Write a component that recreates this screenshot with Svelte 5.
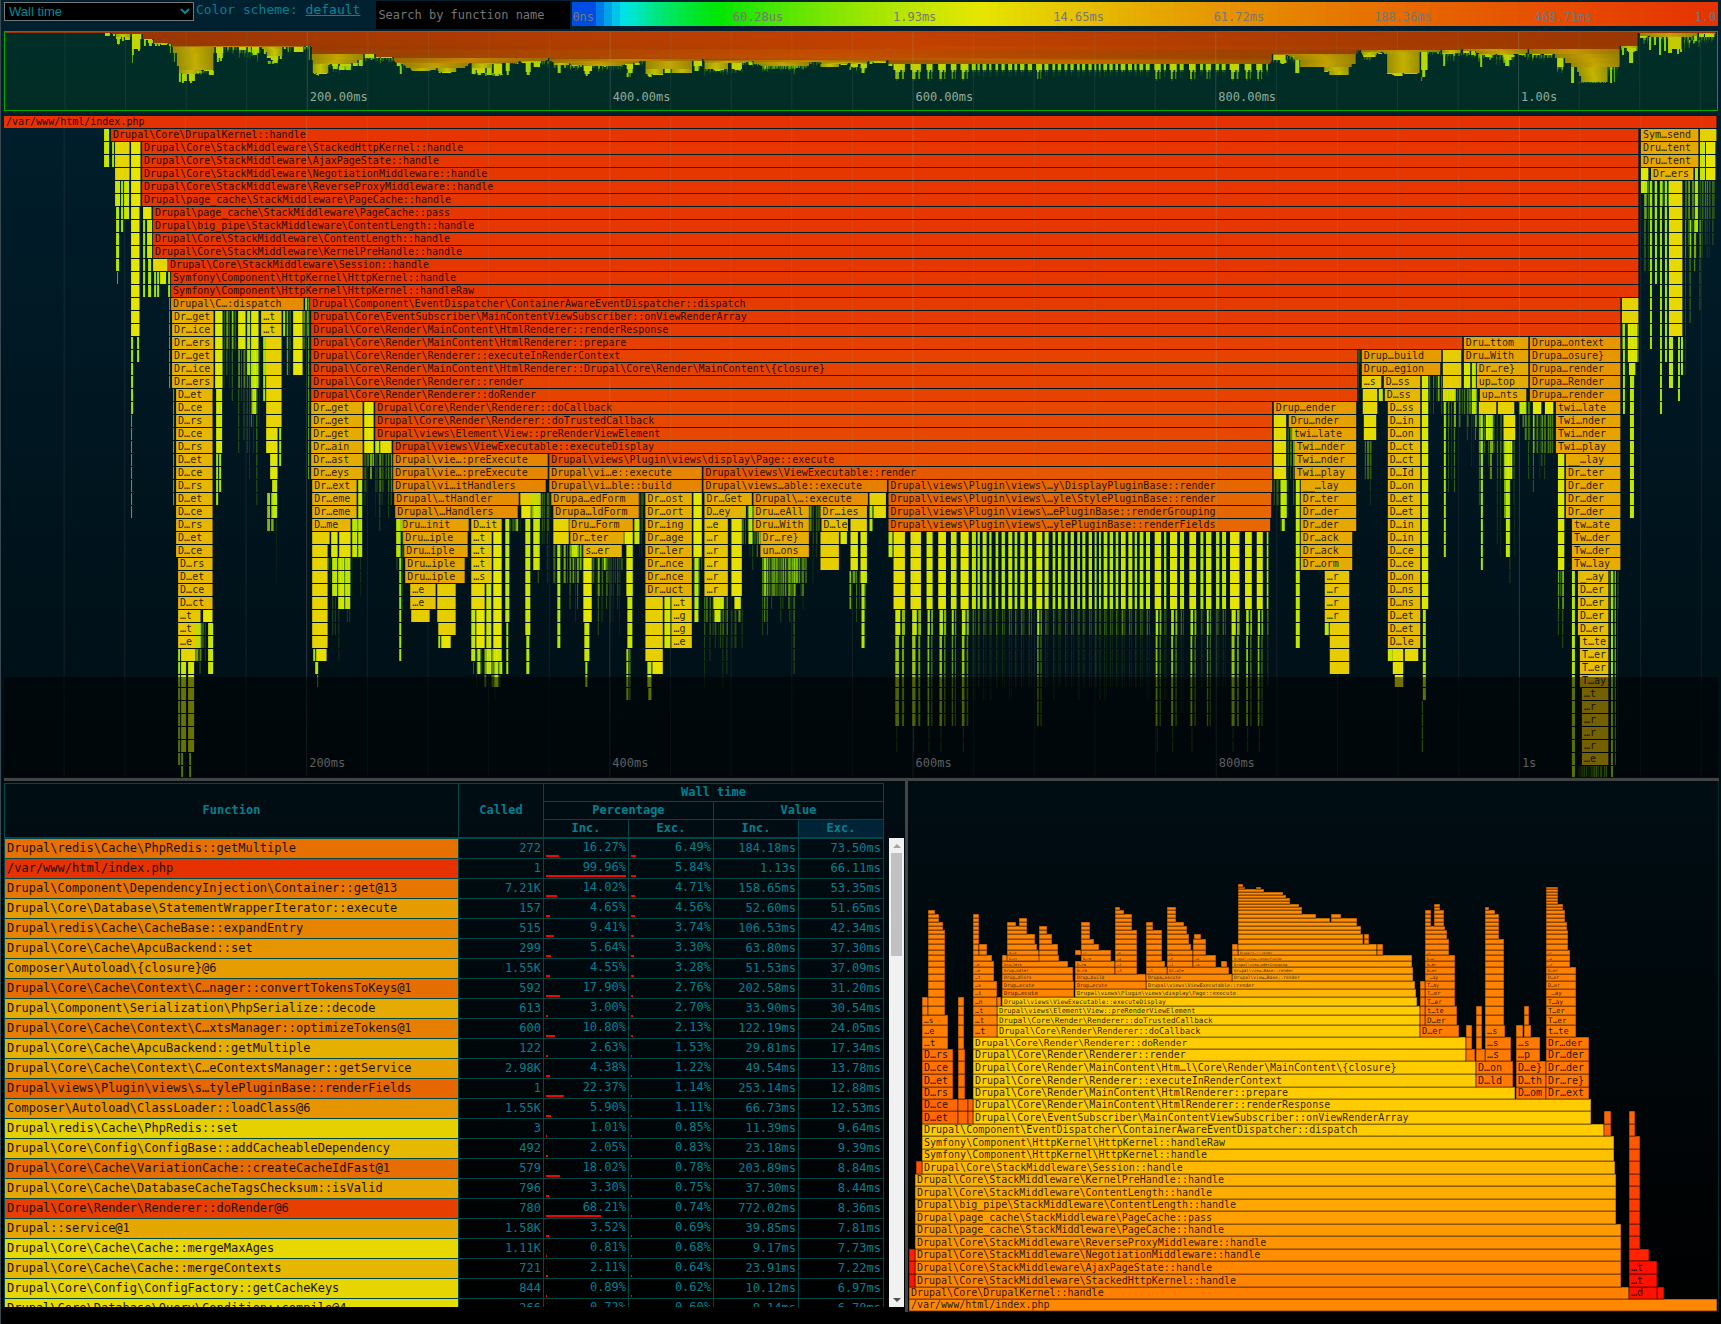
<script>
  // Horizontal axis of the timeline: AXIS_START is the x of t=0, AXIS_SPAN the whole run.
  const AXIS_START = 4;
  const AXIS_SPAN = 1713;
  const ROW = 13;
  const TOTAL_NS = 1.131e9;
  const NS_PER_UNIT = TOTAL_NS / 1711;

  let metric = $state('Wall time');
  let search = $state('');

  const path = [[0, 77, 230], [0, 230, 230], [0, 230, 0], [230, 230, 0], [230, 50, 0]];

  function costColor(ns) {
    const c = ns > 1 ? Math.min(1, Math.log(ns) / Math.log(TOTAL_NS)) : 0;
    const pos = c * (path.length - 1);
    const i = Math.min(path.length - 2, Math.floor(pos));
    const k = pos - i;
    const rgb = path[i].map((v, n) => Math.round(v + (path[i + 1][n] - v) * k));
    return `rgb(${rgb.join(',')})`;
  }

  const scaleLabels = ['0ns', '60.28us', '1.93ms', '14.65ms', '61.72ms', '188.36ms', '468.71ms', '1.01s'];
  const scale = Array.from({ length: 143 }, (_, i) => ({
    color: costColor(Math.pow(i / 143, 5) * TOTAL_NS),
    label: i % 20 === 0 ? scaleLabels[i / 20] : ''
  }));

  // [row, start, end, label]
  const calls = [
    [0, 4, 1716, '/var/www/html/index.php'],
    [1, 111, 1638, 'Drupal\\Core\\DrupalKernel::handle'],
    [2, 142, 1638, 'Drupal\\Core\\StackMiddleware\\StackedHttpKernel::handle'],
    [3, 142, 1638, 'Drupal\\Core\\StackMiddleware\\AjaxPageState::handle'],
    [4, 142, 1638, 'Drupal\\Core\\StackMiddleware\\NegotiationMiddleware::handle'],
    [5, 142, 1638, 'Drupal\\Core\\StackMiddleware\\ReverseProxyMiddleware::handle'],
    [6, 142, 1638, 'Drupal\\page_cache\\StackMiddleware\\PageCache::handle'],
    [7, 153, 1638, 'Drupal\\page_cache\\StackMiddleware\\PageCache::pass'],
    [8, 153, 1638, 'Drupal\\big_pipe\\StackMiddleware\\ContentLength::handle'],
    [9, 153, 1638, 'Drupal\\Core\\StackMiddleware\\ContentLength::handle'],
    [10, 153, 1638, 'Drupal\\Core\\StackMiddleware\\KernelPreHandle::handle'],
    [11, 168, 1638, 'Drupal\\Core\\StackMiddleware\\Session::handle'],
    [12, 171, 1638, 'Symfony\\Component\\HttpKernel\\HttpKernel::handle'],
    [13, 171, 1638, 'Symfony\\Component\\HttpKernel\\HttpKernel::handleRaw'],
    [14, 171, 304, 'Drupal\\C…:dispatch'],
    [14, 310, 1620, 'Drupal\\Component\\EventDispatcher\\ContainerAwareEventDispatcher::dispatch'],
    [15, 311, 1620, 'Drupal\\Core\\EventSubscriber\\MainContentViewSubscriber::onViewRenderArray'],
    [16, 311, 1620, 'Drupal\\Core\\Render\\MainContent\\HtmlRenderer::renderResponse'],
    [17, 311, 1462, 'Drupal\\Core\\Render\\MainContent\\HtmlRenderer::prepare'],
    [18, 311, 1357, 'Drupal\\Core\\Render\\Renderer::executeInRenderContext'],
    [19, 311, 1357, 'Drupal\\Core\\Render\\MainContent\\HtmlRenderer::Drupal\\Core\\Render\\MainContent\\{closure}'],
    [20, 311, 1357, 'Drupal\\Core\\Render\\Renderer::render'],
    [21, 311, 1357, 'Drupal\\Core\\Render\\Renderer::doRender'],
    [22, 375, 1272, 'Drupal\\Core\\Render\\Renderer::doCallback'],
    [23, 375, 1272, 'Drupal\\Core\\Render\\Renderer::doTrustedCallback'],
    [24, 375, 1272, 'Drupal\\views\\Element\\View::preRenderViewElement'],
    [25, 393, 1272, 'Drupal\\views\\ViewExecutable::executeDisplay'],
    [26, 393, 548, 'Drupal\\vie…:preExecute'],
    [26, 549, 1272, 'Drupal\\views\\Plugin\\views\\display\\Page::execute'],
    [27, 393, 548, 'Drupal\\vie…:preExecute'],
    [27, 549, 702, 'Drupal\\vi…e::execute'],
    [27, 703, 1272, 'Drupal\\views\\ViewExecutable::render'],
    [28, 393, 546, 'Drupal\\vi…itHandlers'],
    [28, 549, 702, 'Drupal\\vi…ble::build'],
    [28, 703, 887, 'Drupal\\views…able::execute'],
    [28, 888, 1272, 'Drupal\\views\\Plugin\\views\\…y\\DisplayPluginBase::render'],
    [29, 394, 519, 'Drupal\\…tHandler'],
    [29, 551, 639, 'Drupa…edForm'],
    [29, 704, 752, 'Dr…Get'],
    [29, 753, 868, 'Drupal\\…:execute'],
    [29, 888, 1271, 'Drupal\\views\\Plugin\\views\\…yle\\StylePluginBase::render'],
    [30, 395, 518, 'Drupal\\…Handlers'],
    [30, 553, 639, 'Drupa…ldForm'],
    [30, 704, 746, 'D…ey'],
    [30, 753, 809, 'Dru…eAll'],
    [30, 820, 867, 'Dr…ies'],
    [30, 888, 1271, 'Drupal\\views\\Plugin\\views\\…ePluginBase::renderGrouping'],
    [31, 400, 469, 'Dru…init'],
    [31, 471, 502, 'D…it'],
    [31, 569, 633, 'Dru…Form'],
    [31, 753, 809, 'Dru…With'],
    [31, 821, 848, 'D…le'],
    [31, 888, 1270, 'Drupal\\views\\Plugin\\views\\…ylePluginBase::renderFields'],
    [32, 403, 468, 'Dru…iple'],
    [32, 570, 624, 'Dr…ter'],
    [32, 760, 809, 'Dr…re}'],
    [33, 404, 468, 'Dru…iple'],
    [33, 583, 622, 's…er'],
    [33, 760, 809, 'un…ons'],
    [34, 405, 465, 'Dru…iple'],
    [35, 405, 465, 'Dru…iple'],
    [36, 410, 436, '…e'],
    [37, 410, 436, '…e'],
    [1, 1640, 1698, 'Sym…send'],
    [2, 1640, 1698, 'Dru…tent'],
    [3, 1640, 1698, 'Dru…tent'],
    [4, 1650, 1693, 'Dr…ers'],
    [17, 1463, 1528, 'Dru…ttom'],
    [18, 1361, 1441, 'Drup…build'],
    [18, 1463, 1528, 'Dru…With'],
    [19, 1361, 1440, 'Drup…egion'],
    [19, 1476, 1528, 'Dr…re}'],
    [20, 1361, 1381, '…s'],
    [20, 1383, 1420, 'D…ss'],
    [20, 1476, 1528, 'up…top'],
    [21, 1384, 1420, 'D…ss'],
    [21, 1479, 1526, 'up…nts'],
    [22, 1273, 1356, 'Drup…ender'],
    [23, 1288, 1356, 'Dru…nder'],
    [24, 1291, 1356, 'twi…late'],
    [22, 1555, 1620, 'twi…late']
  ];

  // runs of labelled calls nested straight under each other: [row, start, end, labels]
  const stacks = [
    [15, 172, 214, 'Dr…get Dr…ice Dr…ers Dr…get Dr…ice Dr…ers'],
    [21, 176, 213, 'D…et D…ce D…rs D…ce D…rs D…et D…ce D…rs D…et D…ce D…rs D…et D…ce'],
    [34, 178, 213, 'D…rs D…et D…ce D…ct'],
    [38, 178, 201, '…t …t …e'],
    [15, 261, 282, '…t …t'],
    [22, 311, 363, 'Dr…get Dr…get Dr…get Dr…ain Dr…ast Dr…eys'],
    [28, 312, 357, 'Dr…ext Dr…eme Dr…eme'],
    [31, 312, 351, 'D…me'],
    [32, 471, 492, '…t …t …t …s'],
    [29, 645, 692, 'Dr…ost Dr…ort Dr…ing Dr…age Dr…ler Dr…nce Dr…nce Dr…uct'],
    [37, 671, 692, '…t …g …g …e'],
    [31, 704, 728, '…e …r …r …r …r …r'],
    [17, 1529, 1620, 'Drupa…ontext Drupa…osure} Drupa…render Drupa…Render Drupa…render'],
    [23, 1555, 1620, 'Twi…nder Twi…nder Twi…play'],
    [26, 1565, 1620, '__…lay Dr…ter Dr…der Dr…der Dr…der'],
    [31, 1571, 1620, 'tw…ate Tw…der Tw…der Tw…lay'],
    [35, 1577, 1608, '_…ay D…er D…er D…er D…er'],
    [40, 1579, 1608, 't…te T…er T…er T…ay'],
    [44, 1581, 1608, '…t …r …r …r …r …e'],
    [25, 1294, 1356, 'Twi…nder Twi…nder Twi…play'],
    [28, 1300, 1356, '__…lay Dr…ter Dr…der Dr…der'],
    [32, 1300, 1352, 'Dr…ack Dr…ack Dr…orm'],
    [35, 1324, 1349, '…r …r …r …r'],
    [22, 1387, 1420, 'D…ss D…in D…on D…ct D…ct D…Id D…on D…et D…et D…in D…in D…ce D…ce D…on D…ns D…ns D…et D…et D…le']
  ];

  // unlabelled columns: [start, end, first row, last row]
  const columns = [
    [104, 109, 1, 3], [112, 114, 2, 3], [115, 130, 2, 4], [131, 141, 2, 6], [115, 120, 5, 6], [121, 123, 5, 8], [124, 129, 5, 7],
    [116, 119, 7, 11], [117, 118, 12, 12], [131, 140, 7, 16], [131, 133, 17, 22], [137, 139, 17, 18], [131, 132, 23, 30],
    [143, 152, 7, 7], [143, 145, 8, 13], [147, 152, 8, 10], [148, 151, 11, 13], [154, 156, 12, 13], [153, 168, 11, 11], [160, 166, 12, 12],
    [157, 159, 12, 13], [168, 170, 12, 13], [169, 170, 14, 20], [173, 174, 21, 29],
    [203, 213, 38, 38], [208, 213, 39, 42], [178, 180, 41, 49], [181, 196, 41, 41], [181, 186, 42, 48], [181, 183, 49, 50], [188, 194, 42, 48], [189, 191, 49, 50],
    [215, 223, 15, 20], [216, 222, 21, 25], [216, 218, 26, 29], [219, 221, 26, 28], [238, 246, 15, 17], [247, 250, 15, 19], [251, 259, 15, 20], [252, 256, 21, 22],
    [263, 265, 17, 21], [265, 282, 17, 19], [266, 282, 20, 23], [266, 278, 24, 25], [279, 281, 24, 26], [270, 278, 26, 27], [272, 277, 28, 30],
    [283, 285, 15, 16], [287, 288, 15, 19], [293, 303, 15, 19], [305, 307, 14, 14], [308, 309, 14, 27],
    [364, 374, 22, 25], [375, 379, 25, 25], [380, 392, 25, 25], [358, 362, 28, 33], [352, 357, 31, 33],
    [312, 330, 32, 32], [312, 328, 33, 40], [331, 338, 32, 33], [339, 351, 32, 33], [332, 337, 34, 36], [338, 344, 34, 37], [345, 350, 34, 37],
    [316, 327, 41, 41], [313, 315, 41, 41], [315, 318, 42, 42], [317, 318, 43, 43],
    [396, 400, 31, 33], [399, 401, 34, 41], [437, 456, 36, 38], [411, 430, 38, 38], [438, 456, 39, 39], [438, 440, 40, 40], [441, 451, 40, 40],
    [493, 502, 32, 41], [471, 485, 36, 37], [471, 475, 38, 41], [476, 485, 38, 40], [486, 491, 36, 42], [477, 480, 41, 42], [494, 498, 42, 43], [499, 502, 42, 42],
    [505, 509, 31, 38], [506, 508, 39, 42], [520, 541, 29, 29], [521, 531, 30, 30], [533, 541, 30, 30], [525, 530, 31, 39], [526, 529, 40, 42], [533, 540, 31, 34],
    [553, 569, 31, 32], [634, 639, 31, 32], [624, 633, 32, 32], [557, 560, 33, 40], [571, 577, 33, 33], [583, 592, 34, 38], [584, 589, 39, 41],
    [585, 587, 42, 43], [626, 633, 33, 36], [627, 632, 37, 40], [626, 628, 41, 44], [629, 630, 41, 44],
    [693, 702, 29, 33], [645, 663, 37, 41], [664, 670, 37, 40], [647, 651, 42, 43], [652, 663, 42, 42], [648, 651, 44, 44],
    [694, 698, 34, 38], [731, 742, 31, 36], [734, 741, 37, 37], [748, 752, 30, 32], [713, 724, 37, 37], [714, 720, 38, 38],
    [869, 886, 29, 29], [873, 886, 30, 30], [869, 872, 30, 31], [850, 867, 31, 31], [820, 839, 32, 34], [840, 847, 32, 32], [850, 858, 32, 34],
    [860, 867, 32, 35], [861, 864, 36, 40],
    [1699, 1716, 1, 1], [1699, 1704, 2, 4], [1705, 1715, 2, 4], [1640, 1648, 4, 4], [1640, 1647, 5, 5], [1668, 1682, 5, 16], [1694, 1697, 4, 8],
    [1649, 1651, 5, 17], [1659, 1661, 5, 22], [1654, 1656, 5, 12], [1664, 1666, 5, 18], [1668, 1672, 17, 20], [1677, 1679, 17, 21], [1680, 1682, 17, 19],
    [1621, 1638, 14, 15], [1627, 1637, 16, 18], [1628, 1635, 19, 19], [1629, 1633, 20, 30], [1622, 1624, 16, 22],
    [1442, 1461, 18, 20], [1463, 1470, 19, 20], [1471, 1475, 19, 22], [1362, 1377, 21, 22], [1363, 1376, 23, 24], [1442, 1455, 21, 21], [1378, 1382, 21, 21],
    [1478, 1496, 22, 22], [1497, 1514, 22, 22], [1485, 1492, 23, 24], [1503, 1515, 23, 24], [1504, 1512, 25, 27], [1505, 1509, 28, 33], [1480, 1482, 23, 34],
    [1519, 1525, 22, 22], [1532, 1541, 22, 22], [1544, 1553, 22, 22], [1273, 1286, 23, 27], [1280, 1286, 28, 30], [1281, 1284, 31, 31],
    [1295, 1299, 28, 40], [1421, 1428, 20, 37], [1422, 1425, 38, 44], [1421, 1422, 45, 48], [1557, 1564, 26, 34], [1571, 1574, 35, 50],
    [1329, 1349, 39, 42], [1324, 1328, 39, 39], [1387, 1392, 41, 41], [1392, 1403, 41, 42], [1404, 1418, 41, 41], [1394, 1403, 43, 43],
    [1443, 1445, 22, 33], [1610, 1612, 35, 50], [1614, 1615, 35, 49], [888, 892, 32, 33]
  ];

  // many tiny calls: [start, end, first row, deepest row, average pitch]
  const swarms = [
    [224, 236, 15, 22, 3], [238, 260, 18, 29, 3], [267, 277, 29, 37, 4], [303, 308, 15, 17, 3], [196, 206, 39, 43, 3], [286, 292, 15, 20, 4],
    [328, 352, 34, 41, 3], [352, 362, 31, 36, 3], [364, 392, 26, 31, 3], [396, 404, 31, 38, 4], [471, 502, 41, 44, 4], [510, 520, 31, 31, 3],
    [531, 550, 29, 36, 4], [553, 583, 33, 38, 3], [592, 622, 34, 39, 3], [639, 645, 29, 34, 2], [693, 702, 34, 39, 3], [704, 728, 37, 43, 3],
    [731, 742, 38, 41, 4], [742, 752, 30, 38, 3], [762, 806, 34, 38, 2], [762, 806, 34, 42, 3], [752, 760, 32, 34, 3], [809, 819, 30, 36, 3], [849, 867, 35, 41, 4],
    [1273, 1286, 28, 31, 3], [1287, 1295, 24, 30, 3], [1357, 1361, 18, 22, 2], [1364, 1371, 25, 29, 3], [1428, 1441, 20, 22, 3],
    [1442, 1462, 21, 30, 3], [1463, 1477, 21, 27, 3], [1478, 1503, 23, 30, 5], [1496, 1514, 25, 36, 5], [1518, 1530, 22, 29, 3],
    [1532, 1553, 23, 29, 3], [1557, 1564, 35, 41, 3], [1608, 1618, 35, 50, 3], [1577, 1606, 50, 50, 2], [1621, 1638, 16, 23, 4],
    [1640, 1668, 5, 12, 4], [1684, 1716, 5, 10, 4], [1684, 1700, 8, 19, 6]
  ];

  // one [offset, width] pair per rendered field, in thirds of a unit from 880
  const fieldRuns = [
    [39, 36], [90, 33], [138, 20], [173, 25], [211, 17], [240, 26], [274, 12], [291, 7], [306, 12], [326, 7], [345, 8], [363, 10], [383, 12],
    [402, 8], [419, 13], [442, 13], [467, 18], [492, 12], [516, 8], [532, 10], [552, 9], [570, 10], [590, 8], [605, 9], [624, 10], [642, 6],
    [655, 6], [669, 11], [687, 10], [705, 8], [721, 14], [743, 12], [762, 7], [777, 11], [796, 12], [822, 21], [850, 7], [868, 23], [898, 12],
    [926, 22], [959, 9], [976, 16], [1006, 10], [1024, 12], [1048, 30], [1093, 22], [1128, 20], [1158, 5]
  ];

  function makeRandom(seed) {
    let s = seed;
    return () => (s = (s * 16807) % 2147483647) / 2147483647;
  }

  function buildBars() {
    const out = [];
    const add = (row, start, end, label = '', alpha = 1) => {
      const w = end - start;
      out.push({ row, start, w: w > 6 ? w - 0.6 : w, label, color: costColor(w * NS_PER_UNIT), alpha: w < 1.6 ? alpha * 0.75 : alpha });
    };
    for (const [row, start, end, label] of calls) add(row, start, end, label);
    for (const [row, start, end, labels] of stacks) labels.split(' ').forEach((l, i) => add(row + i, start, end, l));
    for (const [start, end, from, to] of columns) for (let r = from; r <= to; r++) add(r, start, end);

    const rnd = makeRandom(4711);
    for (const [start, end, from, to, pitch] of swarms) {
      let x = start;
      while (x < end) {
        const w = Math.min(end - x, 0.5 + rnd() * pitch * 0.6);
        const strength = 0.3 + rnd() * 0.7;
        const last = from + Math.round((to - from) * rnd());
        for (let r = from; r <= last; r++) {
          const depth = (r - from) / (to - from + 1);
          add(r, x, x + (r > from + 2 ? w * 0.6 : w), '', strength * (1 - depth * 0.7));
        }
        x += w + 0.5 + rnd() * pitch * 0.5;
      }
    }

    for (const [offset, width] of fieldRuns) {
      const x = 880 + offset / 3;
      const w = width / 3;
      for (let r = 32; r <= 37; r++) add(r, x, x + w);
      const thick = w > 8 ? 0.3 : 0.25;
      const first = x + w * 0.15;
      const second = x + w * 0.7;
      const strong = w > 5 ? 1 : 0.55;
      for (let r = 38; r <= 46; r++) {
        const alpha = r < 40 ? strong : strong * (w > 5 ? 0.85 : 0.35);
        if (r > 43 && w < 5 && rnd() > 0.3) break;
        const grow = r < 40 ? 1.4 : 1;
        add(r, first, first + Math.max(1, w * thick * grow), '', alpha);
        add(r, second, second + Math.max(0.8, w * 0.18 * grow), '', alpha * 0.8);
      }
      if (w > 6) for (let r = 47; r <= 48; r++) add(r, first + 1, first + 2, '', 0.4);
    }
    return out;
  }

  const bars = buildBars();
  const ticks = Array.from({ length: 28 }, (_, i) => ({ x: AXIS_START - 1 + (i + 1) * 60.6, major: (i + 1) % 5 === 0, ms: (i + 1) * 40 }));
  const pct = (v) => `${((v / AXIS_SPAN) * 100).toFixed(3)}%`;
  const left = (x) => pct(x - AXIS_START);

  // name | called | inc % | exc % | inc | exc
  const functions = `Drupal\\redis\\Cache\\PhpRedis::getMultiple|272|16.27|6.49|184.18ms|73.50ms
/var/www/html/index.php|1|99.96|5.84|1.13s|66.11ms
Drupal\\Component\\DependencyInjection\\Container::get@13|7.21K|14.02|4.71|158.65ms|53.35ms
Drupal\\Core\\Database\\StatementWrapperIterator::execute|157|4.65|4.56|52.60ms|51.65ms
Drupal\\redis\\Cache\\CacheBase::expandEntry|515|9.41|3.74|106.53ms|42.34ms
Drupal\\Core\\Cache\\ApcuBackend::set|299|5.64|3.30|63.80ms|37.30ms
Composer\\Autoload\\{closure}@6|1.55K|4.55|3.28|51.53ms|37.09ms
Drupal\\Core\\Cache\\Context\\C…nager::convertTokensToKeys@1|592|17.90|2.76|202.58ms|31.20ms
Drupal\\Component\\Serialization\\PhpSerialize::decode|613|3.00|2.70|33.90ms|30.54ms
Drupal\\Core\\Cache\\Context\\C…xtsManager::optimizeTokens@1|600|10.80|2.13|122.19ms|24.05ms
Drupal\\Core\\Cache\\ApcuBackend::getMultiple|122|2.63|1.53|29.81ms|17.34ms
Drupal\\Core\\Cache\\Context\\C…eContextsManager::getService|2.98K|4.38|1.22|49.54ms|13.78ms
Drupal\\views\\Plugin\\views\\s…tylePluginBase::renderFields|1|22.37|1.14|253.14ms|12.88ms
Composer\\Autoload\\ClassLoader::loadClass@6|1.55K|5.90|1.11|66.73ms|12.53ms
Drupal\\redis\\Cache\\PhpRedis::set|3|1.01|0.85|11.39ms|9.64ms
Drupal\\Core\\Config\\ConfigBase::addCacheableDependency|492|2.05|0.83|23.18ms|9.39ms
Drupal\\Core\\Cache\\VariationCache::createCacheIdFast@1|579|18.02|0.78|203.89ms|8.84ms
Drupal\\Core\\Cache\\DatabaseCacheTagsChecksum::isValid|796|3.30|0.75|37.30ms|8.44ms
Drupal\\Core\\Render\\Renderer::doRender@6|780|68.21|0.74|772.02ms|8.36ms
Drupal::service@1|1.58K|3.52|0.69|39.85ms|7.81ms
Drupal\\Core\\Cache\\Cache::mergeMaxAges|1.11K|0.81|0.68|9.17ms|7.73ms
Drupal\\Core\\Cache\\Cache::mergeContexts|721|2.11|0.64|23.91ms|7.22ms
Drupal\\Core\\Config\\ConfigFactory::getCacheKeys|844|0.89|0.62|10.12ms|6.97ms
Drupal\\Core\\Database\\Query\\Condition::compile@4|266|0.72|0.60|8.14ms|6.78ms`.split('\n').map((line) => {
    const [name, called, incPct, excPct, inc, exc] = line.split('|');
    return { name, called, incPct, excPct, inc, exc, color: costColor((incPct / 100) * TOTAL_NS) };
  });

  // Flame graph. Row tops measured up from the floor; upper rows get thinner.
  const FLAME_LEFT = 909;
  const FLAME_SPAN = 809;
  const FLAME_HEIGHT = 529;
  const levels = [12, 24, 37, 50, 62, 75, 87, 100, 112, 125, 137, 150, 162, 175, 187, 200, 212, 224, 237, 250, 262, 274, 286, 296, 305, 314, 322, 330, 337, 344, 350, 356, 361, 367, 372, 377, 381, 385, 389, 393, 397, 401, 404, 407, 410, 413, 416, 419, 422, 424, 427];
  const spine = [136, 128, 132, 136, 142, 148, 154, 160, 166, 172, 178, 184, 192, 196, 204, 204, 204, 204, 204, 204, 204, 204, 204, 204, 204, 200, 182, 165];

  // [level, start, end, label, green channel]
  const flames = [
    [0, 909, 1717, '/var/www/html/index.php'],
    [1, 909, 1629, 'Drupal\\Core\\DrupalKernel::handle'],
    [2, 915, 1621, 'Drupal\\Core\\StackMiddleware\\StackedHttpKernel::handle'],
    [3, 915, 1621, 'Drupal\\Core\\StackMiddleware\\AjaxPageState::handle'],
    [4, 915, 1621, 'Drupal\\Core\\StackMiddleware\\NegotiationMiddleware::handle'],
    [5, 915, 1621, 'Drupal\\Core\\StackMiddleware\\ReverseProxyMiddleware::handle'],
    [6, 915, 1621, 'Drupal\\page_cache\\StackMiddleware\\PageCache::handle'],
    [7, 915, 1616, 'Drupal\\page_cache\\StackMiddleware\\PageCache::pass'],
    [8, 915, 1616, 'Drupal\\big_pipe\\StackMiddleware\\ContentLength::handle'],
    [9, 915, 1616, 'Drupal\\Core\\StackMiddleware\\ContentLength::handle'],
    [10, 915, 1616, 'Drupal\\Core\\StackMiddleware\\KernelPreHandle::handle'],
    [11, 922, 1615, 'Drupal\\Core\\StackMiddleware\\Session::handle'],
    [12, 922, 1614, 'Symfony\\Component\\HttpKernel\\HttpKernel::handle'],
    [13, 922, 1614, 'Symfony\\Component\\HttpKernel\\HttpKernel::handleRaw'],
    [14, 922, 1604, 'Drupal\\Component\\EventDispatcher\\ContainerAwareEventDispatcher::dispatch'],
    [15, 973, 1591, 'Drupal\\Core\\EventSubscriber\\MainContentViewSubscriber::onViewRenderArray'],
    [16, 973, 1591, 'Drupal\\Core\\Render\\MainContent\\HtmlRenderer::renderResponse'],
    [17, 973, 1515, 'Drupal\\Core\\Render\\MainContent\\HtmlRenderer::prepare'],
    [18, 973, 1476, 'Drupal\\Core\\Render\\Renderer::executeInRenderContext'],
    [19, 973, 1476, 'Drupal\\Core\\Render\\MainContent\\Htm…l\\Core\\Render\\MainContent\\{closure}'],
    [20, 973, 1466, 'Drupal\\Core\\Render\\Renderer::render'],
    [21, 973, 1466, 'Drupal\\Core\\Render\\Renderer::doRender'],
    [22, 997, 1420, 'Drupal\\Core\\Render\\Renderer::doCallback'],
    [23, 997, 1420, 'Drupal\\Core\\Render\\Renderer::doTrustedCallback'],
    [24, 997, 1420, 'Drupal\\views\\Element\\View::preRenderViewElement'],
    [25, 1002, 1417, 'Drupal\\views\\ViewExecutable::executeDisplay'],
    [26, 1075, 1416, 'Drupal\\views\\Plugin\\views\\display\\Page::execute'],
    [27, 1146, 1415, 'Drupal\\views\\ViewExecutable::render'],
    [28, 1232, 1413, 'Drupal\\view…Base::render', 160],
    [29, 1232, 1413, 'Drupal\\view…Base::render', 158],
    [30, 1232, 1412, 'Drupal\\view…nderGrouping', 156],
    [31, 1232, 1412, 'Drupal\\view…renderFields', 154],
    [32, 1238, 1377, 'Drupal\\C…r::render', 150],
    [26, 1002, 1074, 'Drup…ecute', 132], [27, 1002, 1074, 'Drup…ecute', 132], [28, 1002, 1073, 'Drup…dlers', 132],
    [29, 1002, 1073, 'Drup…ndler', 132], [30, 1002, 1068, 'Dru…lers', 132], [31, 1002, 1059, '', 132],
    [27, 1075, 1146, 'Drup…ecute', 134], [28, 1075, 1146, 'Drup…build', 134], [28, 1146, 1232, 'Drupa…xecute', 138],
    [29, 1167, 1229, 'Dr…ute', 132],
    [1, 1657, 1664, '', 20], [4, 1629, 1649, '', 35],
    [2, 909, 915, '', 20], [3, 909, 915, '', 26], [4, 909, 915, '', 32], [11, 916, 922, '', 80],
    [14, 1604, 1611, '', 100], [15, 1604, 1611, '', 104]
  ];

  // [level, start, end, labels from the bottom up, green channel]
  const flameStacks = [
    [15, 922, 958, 'D…et D…ce', 104], [17, 922, 953, 'D…rs D…et D…ce D…rs', 114], [21, 922, 948, '…t …e …s', 126],
    [22, 973, 997, '…t …t …t …n …t …s', 130], [28, 973, 994, '…t …e …e', 130],
    [17, 1516, 1546, 'D…om D…th D…e}', 118], [20, 1516, 1540, '…p …s', 122],
    [17, 1546, 1589, 'Dr…ext Dr…re} Dr…der Dr…der Dr…der', 120], [22, 1546, 1576, 't…te T…er T…er T…ay _…ay D…er D…er D…er', 128],
    [30, 1546, 1570, '…r …e …r', 130],
    [18, 1476, 1513, 'D…ld D…on', 120], [20, 1485, 1511, '…s …s', 122], [22, 1485, 1505, '…s', 128],
    [22, 1420, 1459, 'D…er', 124], [23, 1425, 1457, 'D…er t…te', 126], [25, 1425, 1455, 'T…er T…er T…ay _…ay D…er D…er D…er', 128], [32, 1425, 1449, '…s', 130],
    [29, 1075, 1115, 'D…rm D…rm', 132], [31, 1081, 1111, 'D…rm …r', 132], [29, 1115, 1137, '…t …t …g …e', 130], [29, 1146, 1167, '…t', 130],
    [30, 1167, 1193, '…l …h …j', 130], [30, 1193, 1216, '…s …e', 130], [31, 1007, 1039, 'D…it D…le', 132],
    [1, 1629, 1657, '…d …t …t', 16]
  ];

  // [start, end, first level, last level, green channel]
  const flameColumns = [
    [958, 968, 15, 16, 104], [968, 973, 15, 16, 100], [958, 965, 17, 20, 114], [958, 964, 21, 25, 124],
    [922, 928, 24, 25, 126], [928, 945, 24, 36, 130], [928, 943, 37, 38, 130], [928, 939, 39, 40, 130], [928, 935, 41, 41, 130],
    [973, 992, 31, 31, 130], [973, 979, 32, 40, 130], [979, 987, 32, 33, 130], [997, 1001, 25, 25, 130],
    [1007, 1037, 33, 33, 134], [1007, 1035, 34, 35, 134], [1007, 1027, 36, 37, 134], [1007, 1016, 38, 38, 134], [1019, 1027, 38, 39, 134],
    [1039, 1058, 32, 33, 130], [1039, 1052, 34, 35, 130], [1039, 1047, 36, 37, 130],
    [1075, 1081, 32, 32, 130], [1081, 1099, 33, 33, 130], [1081, 1094, 34, 34, 130], [1081, 1090, 35, 38, 130],
    [1115, 1137, 33, 36, 130], [1115, 1132, 37, 40, 130], [1115, 1124, 41, 41, 130], [1115, 1120, 42, 42, 130],
    [1146, 1165, 30, 30, 130], [1146, 1162, 31, 36, 130], [1146, 1153, 37, 38, 130], [1221, 1227, 30, 30, 128],
    [1167, 1191, 33, 33, 132], [1167, 1189, 34, 35, 132], [1167, 1187, 36, 37, 132], [1167, 1184, 38, 38, 132], [1167, 1176, 39, 42, 132],
    [1193, 1206, 32, 34, 128], [1194, 1201, 35, 35, 128],
    [1232, 1238, 32, 33, 130], [1238, 1377, 33, 33, 150], [1377, 1383, 32, 33, 130], [1238, 1363, 34, 35, 150], [1364, 1369, 34, 35, 130],
    [1238, 1361, 36, 37, 148], [1238, 1357, 38, 38, 148], [1238, 1330, 39, 39, 145], [1331, 1357, 39, 39, 136], [1238, 1316, 40, 40, 142],
    [1331, 1341, 40, 40, 134], [1238, 1302, 41, 42, 140], [1238, 1299, 43, 43, 140], [1238, 1290, 44, 45, 140], [1238, 1286, 46, 46, 138],
    [1238, 1283, 47, 47, 138], [1238, 1264, 48, 48, 134], [1238, 1245, 49, 49, 130], [1256, 1261, 49, 49, 130], [1238, 1243, 50, 50, 130],
    [1420, 1425, 23, 27, 124], [1425, 1449, 33, 34, 130], [1425, 1447, 35, 36, 130], [1425, 1445, 37, 37, 130], [1425, 1431, 38, 41, 130],
    [1434, 1444, 38, 41, 130], [1434, 1440, 42, 43, 130],
    [1466, 1475, 20, 20, 120], [1466, 1472, 21, 22, 124], [1476, 1485, 20, 20, 120], [1476, 1482, 21, 24, 126],
    [1485, 1504, 23, 34, 130], [1485, 1499, 35, 40, 130], [1485, 1495, 41, 41, 130], [1485, 1489, 42, 42, 130],
    [1516, 1523, 22, 22, 126], [1524, 1531, 22, 22, 126], [1524, 1529, 23, 24, 126],
    [1546, 1568, 33, 36, 130], [1546, 1567, 37, 38, 130], [1546, 1565, 39, 41, 130], [1546, 1563, 42, 43, 130], [1546, 1558, 44, 49, 130]
  ];

  function buildFlames() {
    const out = [];
    const add = (level, start, end, label, green) => {
      const bottom = level ? levels[level - 1] : 0;
      const size = Math.min(10, 10.6 * Math.pow(0.9, level - 20));
      out.push({ start, w: end - start, y: FLAME_HEIGHT - levels[level], h: levels[level] - bottom, label, size, color: `rgb(255,${green},0)` });
    };
    for (const [level, start, end, label, green] of flames) add(level, start, end, label, green ?? spine[level]);
    for (const [level, start, end, labels, green] of flameStacks) labels.split(' ').forEach((l, i) => add(level + i, start, end, l, green));
    for (const [start, end, from, to, green] of flameColumns) for (let l = from; l <= to; l++) add(l, start, end, '', green);
    for (let l = 5; l <= 15; l++) add(l, 1629, l < 14 ? 1640 : 1635, '', 35 + (l - 4) * 6);
    return out;
  }

  const flameBars = buildFlames();
  const flamePct = (v) => `${((v / FLAME_SPAN) * 100).toFixed(3)}%`;
</script>

<main>
  <header>
    <select bind:value={metric} aria-label="Metric">
      <option>Wall time</option>
      <option>CPU time</option>
    </select>
    <span class="scheme">Color scheme: <a href="#scheme">default</a></span>
    <input type="text" placeholder="Search by function name" aria-label="Search by function name" bind:value={search} />
    <div class="scale">
      {#each scale as step}
        <div class="step" style="background: {step.color}">
          {#if step.label}<span>{step.label}</span>{/if}
        </div>
      {/each}
    </div>
  </header>

  <section class="overview">
    <svg width="100%" height="78">
      <defs>
        <linearGradient id="shade">
          <stop offset="0" stop-opacity="0.22" />
          <stop offset="0.5" stop-opacity="0" />
          <stop offset="1" stop-opacity="0.22" />
        </linearGradient>
      </defs>
      {#each bars as bar}
        <rect x={left(bar.start)} y={bar.row} width={pct(bar.w)} height="1" fill={bar.color} opacity={bar.alpha} />
        {#if bar.w > 14}
          <rect x={left(bar.start)} y={bar.row} width={pct(bar.w)} height="1" fill="url(#shade)" />
        {/if}
      {/each}
      <rect class="range" width="100%" height="100%" />
      {#each ticks as tick}
        <rect class="tick" class:major={tick.major} x={left(tick.x)} y="0" width="1" height="100%" />
        {#if tick.major}
          <text class="time" x={left(tick.x)} dx="3" y="69">{tick.ms === 1000 ? '1.00s' : `${tick.ms}.00ms`}</text>
        {/if}
      {/each}
    </svg>
  </section>

  <section class="timeline">
    <svg width="100%" height="661">
      {#each bars as bar}
        <rect x={left(bar.start)} y={bar.row * ROW} width={pct(bar.w)} height={ROW - 1} fill={bar.color} opacity={bar.alpha} />
        {#if bar.label}
          <text class="call" x={left(bar.start)} dx="2" y={bar.row * ROW + 9}>{bar.label}</text>
        {/if}
      {/each}
      {#each ticks as tick}
        <rect class="tick" class:major={tick.major} x={left(tick.x)} y="0" width="1" height="100%" />
      {/each}
      <rect y="561" width="100%" height="100" fill="#000" opacity="0.5" />
      {#each ticks.filter((t) => t.major) as tick}
        <text class="time dim" x={left(tick.x)} dx="3" y="651">{tick.ms === 1000 ? '1s' : `${tick.ms}ms`}</text>
      {/each}
    </svg>
  </section>

  <div class="splitter"></div>

  <div class="bottom">
    <section class="profile">
      <table class="head">
        <colgroup><col /><col class="num" /><col class="num" /><col class="num" /><col class="num" /><col class="num" /></colgroup>
        <thead>
          <tr><th rowspan="3">Function</th><th rowspan="3">Called</th><th colspan="4">Wall time</th></tr>
          <tr><th colspan="2">Percentage</th><th colspan="2">Value</th></tr>
          <tr><th>Inc.</th><th>Exc.</th><th>Inc.</th><th class="sorted">Exc.</th></tr>
        </thead>
      </table>
      <div class="scroll">
        <table class="body">
          <colgroup><col /><col class="num" /><col class="num" /><col class="num" /><col class="num" /><col class="num" /></colgroup>
          <tbody>
            {#each functions as fn}
              <tr>
                <td class="name" style="background: {fn.color}">{fn.name}</td>
                <td>{fn.called}</td>
                {#each [fn.incPct, fn.excPct] as share}
                  <td class="share">
                    <div>{share}%</div>
                    <div class="bar" style="width: {share}%"></div>
                  </td>
                {/each}
                <td>{fn.inc}</td>
                <td>{fn.exc}</td>
              </tr>
            {/each}
          </tbody>
        </table>
        <div class="scrollbar">
          <i class="up"></i>
          <div class="thumb"></div>
          <i class="down"></i>
        </div>
      </div>
    </section>

    <div class="divider"></div>

    <section class="flame">
      <svg width="100%" height={FLAME_HEIGHT}>
        {#each flameBars as f}
          <rect class="cell" x={flamePct(f.start - FLAME_LEFT)} y={f.y} width={flamePct(f.w)} height={f.h} fill={f.color} />
          {#if f.label}
            <text class="call" x={flamePct(f.start - FLAME_LEFT)} dx="2" y={f.y + f.h * 0.76} style="font-size: {f.size}px">{f.label}</text>
          {/if}
        {/each}
      </svg>
    </section>
  </div>
</main>

<style>
  :global(body) {
    background: #000;
  }

  main {
    min-height: 100vh;
    box-sizing: border-box;
    border-left: 1px solid #3c4850;
    padding: 0 2px 0 3px;
    background: linear-gradient(to bottom, #002130, #000);
    color: #008090;
    font: 12px "DejaVu Sans Mono", monospace;
  }

  header {
    display: flex;
    align-items: flex-start;
    height: 31px;
  }

  select {
    width: 190px;
    height: 19px;
    margin-top: 2px;
    padding: 0;
    background: #000;
    border: 1px solid #767676;
    border-radius: 0;
    color: #008898;
    font: 13px "Liberation Sans", Arial, sans-serif;
  }

  .scheme { font-size: 13px; line-height: 16px; margin: 2px 16px 0 2px; white-space: nowrap; }
  a { color: #008898; }

  input {
    width: 194px;
    height: 28px;
    margin: 1px 2px 0 0;
    padding: 0 2px;
    box-sizing: border-box;
    background: #000;
    border: 0;
    color: #008898;
    font: 12px "DejaVu Sans Mono", monospace;
  }
  input::placeholder { color: #757575; }

  .scale { flex: 1; display: flex; height: 24px; margin: 2px 1px 0 0; overflow: hidden; }
  .step { flex: 1 1 0; min-width: 0; }
  .step span { position: relative; z-index: 1; display: block; width: 0; line-height: 30px; color: #777; white-space: nowrap; }

  svg { display: block; }

  .overview { border: 1px solid #00aa00; margin: 0 1px 5px 0; height: 78px; }
  .range { fill: #008000; opacity: 0.15; }

  .timeline { overflow: hidden; margin-right: 1px; }

  .tick { fill: #a0a8a8; opacity: 0.12; }
  .tick.major { opacity: 0.25; }

  .time { fill: #94ab98; font-size: 12px; }
  .time.dim { fill: #5c5f60; }
  .call { fill: #000; fill-opacity: 0.85; font-size: 10px; white-space: pre; }

  .splitter { height: 3px; margin-top: 1px; background: #444; }

  .bottom { display: flex; height: 531px; }

  .profile { flex: 0 0 901px; max-width: 60%; padding: 2px 1px 0 0; box-sizing: border-box; }

  table { border-collapse: collapse; table-layout: fixed; width: calc(100% - 20px); }
  .num { width: 85px; }
  th, td { border: 1px solid #004848; padding: 0 2px; }
  th { height: 17px; line-height: 17px; box-sizing: content-box; }
  th.sorted { background: #002435; }
  .head { border-bottom: 1px solid #004848; }

  .scroll { display: flex; justify-content: space-between; height: 469px; overflow: hidden; }
  .body { align-self: flex-start; }
  td { height: 19px; line-height: 19px; text-align: right; white-space: nowrap; }
  .name { color: #1a1200; text-align: left; overflow: hidden; }
  .share div:first-child { line-height: 16px; }
  .share .bar { height: 2px; min-width: 1px; margin-bottom: 1px; background: #f00; }

  .scrollbar { display: flex; flex-direction: column; align-items: center; width: 15px; background: #f1f1f1; }
  .thumb { width: 11px; height: 103px; background: #c1c1c1; margin-bottom: auto; }
  i { border: 4px solid transparent; border-top-width: 0; border-bottom: 4px solid #a3a3a3; margin: 6px 0 5px; }
  i.down { border-bottom-width: 0; border-top: 4px solid #505050; }

  .divider { width: 3px; background: #444; }

  .flame { flex: 1; min-width: 0; border-right: 1px solid #002a2a; border-bottom: 1px solid #002a2a; padding: 1px 0 0 1px; }
  .cell { stroke: #000; stroke-opacity: 0.5; }
</style>
